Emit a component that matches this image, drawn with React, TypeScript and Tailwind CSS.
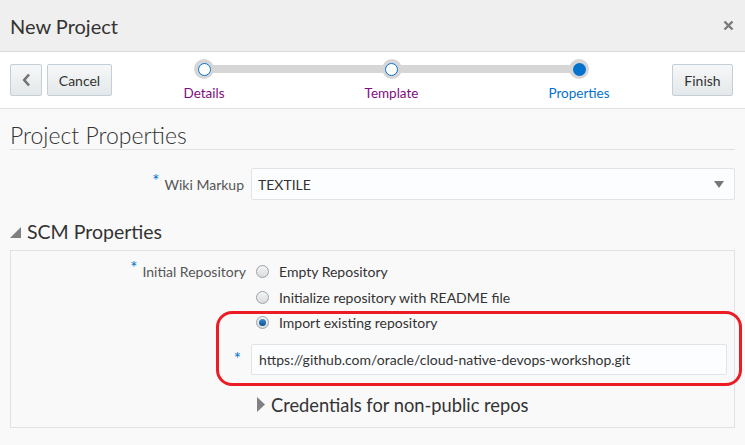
import React from "react";

const steps = [
  { label: "Details", done: true },
  { label: "Template", done: true },
  { label: "Properties", done: false },
];

function Radio({ checked }: { checked?: boolean }) {
  return (
    <span className="flex h-[13px] w-[13px] items-center justify-center rounded-full border border-[#9aa3aa] bg-gradient-to-b from-[#f4f4f4] to-[#d9dcde]">
      {checked && <span className="h-[7px] w-[7px] rounded-full bg-gradient-to-b from-[#3b8fd6] to-[#0b4f8f]" />}
    </span>
  );
}

function Stepper() {
  return (
    <div className="relative ml-[82px] flex w-[395px] justify-between">
      <div className="absolute left-[10px] right-[10px] top-[6px] h-[8px] bg-[#d6d6d6]" />
      {steps.map((s) => (
        <div key={s.label} className="relative flex w-[20px] flex-col items-center">
          <span className="flex h-[20px] w-[20px] items-center justify-center rounded-full bg-[#d6d6d6]">
            {s.done ? (
              <span className="h-[13px] w-[13px] rounded-full border-[1.5px] border-[#0572ce] bg-white" />
            ) : (
              <span className="h-[13px] w-[13px] rounded-full bg-[#0572ce]" />
            )}
          </span>
          <span
            className={
              "mt-[6px] whitespace-nowrap text-[13.5px] leading-[16px] " +
              (s.done ? "text-[#7f0c7f]" : "text-[#0572ce]")
            }
          >
            {s.label}
          </span>
        </div>
      ))}
    </div>
  );
}

export default function App() {
  return (
    <div className="h-[445px] w-[745px] overflow-hidden bg-[#f9f9f9] font-['Lato',sans-serif] text-[#333]">
      {/* dialog header */}
      <div className="flex h-[52px] items-center justify-between border-b border-[#d6dbe0] bg-[#efefef] px-[10px]">
        <h1 className="text-[20px] leading-[24px] text-[#333]">New Project</h1>
        <svg width="11" height="11" viewBox="0 0 11 11" className="mr-[1px]">
          <path d="M1.5 1.5 L9.5 9.5 M9.5 1.5 L1.5 9.5" stroke="#7a7a7a" strokeWidth="2.4" />
        </svg>
      </div>

      {/* train */}
      <div className="flex h-[57px] items-center border-b border-[#e0e3e6] bg-white pl-[10px] pr-[12px]">
        <button className="flex h-[32px] w-[32px] items-center justify-center rounded-[2px] border border-[#c4ced7] bg-gradient-to-b from-[#f6f7f8] to-[#e4e8ea]">
          <svg width="9" height="14" viewBox="0 0 9 14">
            <path d="M7 1.5 L2.2 7 L7 12.5" fill="none" stroke="#737373" strokeWidth="2.6" />
          </svg>
        </button>
        <button className="ml-[5px] h-[32px] w-[65px] rounded-[2px] border border-[#c4ced7] bg-gradient-to-b from-[#f6f7f8] to-[#e4e8ea] text-[14px] text-[#333]">
          Cancel
        </button>
        <Stepper />
        <button className="ml-auto h-[32px] w-[61px] rounded-[2px] border border-[#c4ced7] bg-gradient-to-b from-[#f6f7f8] to-[#e4e8ea] text-[14px] text-[#333]">
          Finish
        </button>
      </div>

      <div className="px-[10px]">
        <h2 className="mt-[12px] border-b border-[#dfe3e6] text-[23px] font-light leading-[28px] text-[#333]">
          Project Properties
        </h2>

        <div className="mt-[18px] flex items-center">
          <label className="w-[234px] text-right text-[14px] text-[#555]">
            <span className="relative -top-[3px] mr-[5px] text-[17px] leading-[10px] text-[#0572ce]">*</span>
            Wiki Markup
          </label>
          <div className="ml-[7px] flex h-[32px] flex-1 items-center justify-between rounded-[2px] border border-[#dfe4e7] bg-[#fcfdfe] pl-[6px] pr-[10px] text-[14px] text-[#333]">
            <span>TEXTILE</span>
            <svg width="10" height="7" viewBox="0 0 10 7">
              <path d="M0 0 H10 L5 7 Z" fill="#777" />
            </svg>
          </div>
        </div>

        <div className="mt-[20px] flex items-center">
          <svg width="11" height="11" viewBox="0 0 11 11">
            <path d="M11 0 V11 H0 Z" fill="#808080" />
          </svg>
          <h3 className="ml-[6px] text-[19.5px] leading-[24px] text-[#333]">SCM Properties</h3>
        </div>

        <div className="relative mt-[6px] h-[178px] border border-[#dfe3e6] bg-[#f9f9f9] pt-[8px]">
          <div className="flex">
            <label className="w-[235px] pt-[2px] text-right text-[14px] text-[#555]">
              <span className="relative -top-[3px] mr-[5px] text-[17px] leading-[10px] text-[#0572ce]">*</span>
              Initial Repository
            </label>
            <div className="ml-[10px] flex flex-col">
              {[
                ["Empty Repository", false],
                ["Initialize repository with README file", false],
                ["Import existing repository", true],
              ].map(([t, c]) => (
                <div key={t as string} className="flex h-[25.5px] items-center">
                  <Radio checked={c as boolean} />
                  <span className="ml-[10px] text-[14px] text-[#333]">{t}</span>
                </div>
              ))}
            </div>
          </div>

          <div className="mt-[8px] flex items-center">
            <label className="w-[233px] pr-[3px] text-right text-[17px] text-[#0572ce]">*</label>
            <div className="ml-[7px] flex h-[31px] w-[476px] items-center rounded-[2px] border border-[#dfe4e7] bg-[#fcfdfe] pl-[7px] text-[14px] text-[#333]">
              https://github.com/oracle/cloud-native-devops-workshop.git
            </div>
          </div>

          <div className="ml-[246px] mt-[18px] flex items-center">
            <svg width="8" height="15" viewBox="0 0 8 15">
              <path d="M0 0 L8 7.5 L0 15 Z" fill="#808080" />
            </svg>
            <span className="ml-[6px] text-[18.3px] leading-[24px] text-[#333]">Credentials for non-public repos</span>
          </div>

          {/* annotation */}
          <div className="pointer-events-none absolute left-[205px] top-[60px] h-[75px] w-[526px] rounded-[16px] border-[3px] border-[#ec1c24]" />
        </div>
      </div>
    </div>
  );
}
